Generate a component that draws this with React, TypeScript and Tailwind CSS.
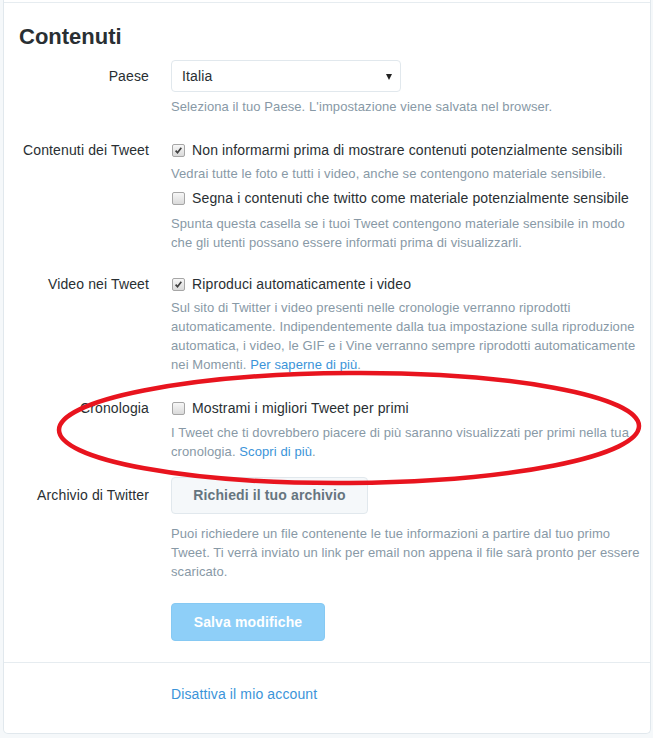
import React from "react";

function Checkbox({ checked }: { checked?: boolean }) {
  return (
    <span className="ml-[1px] inline-flex h-[13px] w-[13px] shrink-0 items-center justify-center rounded-[2px] border border-[#a6a6a6] bg-linear-to-b from-[#f7f7f7] to-[#dadada]">
      {checked && (
        <svg width="9" height="9" viewBox="0 0 9 9">
          <path d="M1.6 4.7 L3.5 6.7 L7.3 1.8" fill="none" stroke="#404040" strokeWidth="1.7" />
        </svg>
      )}
    </span>
  );
}

function Label({ children, lh = "leading-[20px]" }: { children: React.ReactNode; lh?: string }) {
  return <div className={`text-right text-[14px] tracking-[0.13px] text-[#292f33] ${lh}`}>{children}</div>;
}

function Help({ children, mt }: { children: React.ReactNode; mt: string }) {
  return <p className={`text-[13px] leading-[19px] tracking-[0.09px] text-[#8899a6] ${mt}`}>{children}</p>;
}

function CheckRow({ checked, children, mt = "" }: { checked?: boolean; children: React.ReactNode; mt?: string }) {
  return (
    <div className={`flex h-[20px] items-center gap-[7px] text-[14px] leading-[20px] tracking-[0.13px] text-[#292f33] ${mt}`}>
      <Checkbox checked={checked} />
      <span>{children}</span>
    </div>
  );
}

export default function App() {
  return (
    <div className="relative min-h-[738px] w-[653px] bg-[#f5f8fa] font-['Liberation_Sans',Arial,Helvetica,sans-serif]">
      <div className="ml-[3px] mr-[2px] rounded-b-[5px] border-x border-b border-[#e1e8ed] bg-white pb-[29px]">
        <div className="h-[2px]" />
        <div className="h-[1px] bg-[#e6ecf0]" />
        <div className="pl-[15px]">
          <h2 className="mt-[21px] text-[22px] font-bold leading-[26px] text-[#292f33]">Contenuti</h2>

          {/* Paese */}
          <div className="mt-[10px] grid grid-cols-[130px_471px] gap-x-[22px]">
            <Label lh="leading-[32px]">Paese</Label>
            <div>
              <div className="relative flex h-[32px] w-[230px] items-center rounded-[4px] border border-[#e1e8ed] bg-white pl-[10px] text-[14px] tracking-[0.13px] text-[#292f33]">
                Italia
                <svg className="absolute right-[8px] top-[13px]" width="6" height="6" viewBox="0 0 6 6">
                  <polygon points="0,0 6,0 3,6" fill="#222" />
                </svg>
              </div>
              <Help mt="mt-[5px]">Seleziona il tuo Paese. L'impostazione viene salvata nel browser.</Help>
            </div>
          </div>

          {/* Contenuti dei Tweet */}
          <div className="mt-[24px] grid grid-cols-[130px_471px] gap-x-[22px]">
            <Label>Contenuti dei Tweet</Label>
            <div>
              <CheckRow checked>Non informarmi prima di mostrare contenuti potenzialmente sensibili</CheckRow>
              <Help mt="mt-[4px]">Vedrai tutte le foto e tutti i video, anche se contengono materiale sensibile.</Help>
              <CheckRow mt="mt-[5px]">Segna i contenuti che twitto come materiale potenzialmente sensibile</CheckRow>
              <Help mt="mt-[6px]">
                Spunta questa casella se i tuoi Tweet contengono materiale sensibile in modo che gli utenti possano essere informati prima di visualizzarli.
              </Help>
            </div>
          </div>

          {/* Video nei Tweet */}
          <div className="mt-[22px] grid grid-cols-[130px_471px] gap-x-[22px]">
            <Label>Video nei Tweet</Label>
            <div>
              <CheckRow checked>Riproduci automaticamente i video</CheckRow>
              <Help mt="mt-[4px]">
                Sul sito di Twitter i video presenti nelle cronologie verranno riprodotti automaticamente. Indipendentemente dalla tua impostazione sulla riproduzione automatica, i video, le GIF e i Vine verranno sempre riprodotti automaticamente nei Momenti.{" "}
                <a className="text-[#3b94d9]">Per saperne di più</a>.
              </Help>
            </div>
          </div>

          {/* Cronologia */}
          <div className="mt-[24px] grid grid-cols-[130px_471px] gap-x-[22px]">
            <Label>Cronologia</Label>
            <div>
              <CheckRow>Mostrami i migliori Tweet per primi</CheckRow>
              <Help mt="mt-[5px]">
                I Tweet che ti dovrebbero piacere di più saranno visualizzati per primi nella tua cronologia.{" "}
                <a className="text-[#3b94d9]">Scopri di più</a>.
              </Help>
            </div>
          </div>

          {/* Archivio */}
          <div className="mt-[16px] grid grid-cols-[130px_471px] gap-x-[22px]">
            <Label lh="leading-[37px]">Archivio di Twitter</Label>
            <div>
              <button className="flex h-[37px] w-[197px] items-center justify-center rounded-[4px] border border-[#e1e8ed] bg-[#f5f8fa] text-[14px] font-bold tracking-[0.13px] text-[#66757f]">
                Richiedi il tuo archivio
              </button>
              <Help mt="mt-[10px]">
                Puoi richiedere un file contenente le tue informazioni a partire dal tuo primo Tweet. Ti verrà inviato un link per email non appena il file sarà pronto per essere scaricato.
              </Help>
              <button className="mt-[22px] flex h-[38px] w-[154px] items-center justify-center rounded-[4px] border border-[#86c9f3] bg-[#8ecff8] text-[14px] font-bold tracking-[0.13px] text-white">
                Salva modifiche
              </button>
            </div>
          </div>
        </div>

        <div className="mt-[21px] h-[1px] bg-[#e6ecf0]" />
        <div className="mt-[21px] pl-[167px] text-[14px] leading-[20px] tracking-[0.13px]">
          <a className="text-[#3b94d9]">Disattiva il mio account</a>
        </div>
      </div>

      <svg className="pointer-events-none absolute left-0 top-0" width="653" height="738" viewBox="0 0 653 738">
        <ellipse cx="349" cy="428" rx="290" ry="55" fill="none" stroke="#e8141e" strokeWidth="4.5" transform="rotate(-0.4 349 428)" />
      </svg>
    </div>
  );
}
